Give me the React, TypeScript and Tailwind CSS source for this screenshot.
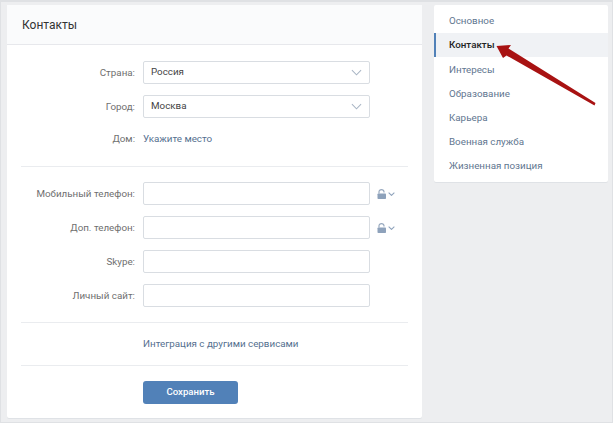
const Chevron = ({ w = 11, h = 7, color = "#a8b5c4", sw = 1.1 }: { w?: number; h?: number; color?: string; sw?: number }) => (
  <svg width={w} height={h} viewBox="0 0 12 7" fill="none" stroke={color} strokeWidth={sw}>
    <path d="M1 1l5 5 5-5" />
  </svg>
);

const Lock = () => (
  <span className="flex items-center gap-[1px]">
    <svg width="10" height="10" viewBox="0 0 10 10">
      <path d="M2 4.5V2.8C2 1.4 3 .7 4.5 .7S7 1.4 7 2.8V3.4" fill="none" stroke="#98a9bf" strokeWidth="1.2" />
      <rect x="0.5" y="4.5" width="8.5" height="5.5" rx="0.8" fill="#8ea2bb" />
    </svg>
    <Chevron w={7} h={4} color="#8fa3bc" sw={1.8} />
  </span>
);

const Label = ({ children }: { children: string }) => (
  <div className="w-[114px] shrink-0 text-right whitespace-nowrap text-[#6f6f6f] text-[9.8px] leading-[14px]">{children}</div>
);

const Field = ({ label, value, select, lock, className }: { label: string; value?: string; select?: boolean; lock?: boolean; className?: string }) => (
  <div className={`flex items-center gap-2 ${className ?? ""}`}>
    <Label>{label}</Label>
    <div className="w-[227px] h-[23px] shrink-0 bg-white border border-[#d9dde2] rounded-[2px] flex items-center justify-between pl-[7px] pr-[7px] text-[9.8px] text-[#444]">
      <span>{value}</span>
      {select && <Chevron />}
    </div>
    {lock && <span className="-ml-[1px]"><Lock /></span>}
  </div>
);

const Divider = ({ className }: { className?: string }) => <div className={`h-px bg-[#eaecef] ${className ?? ""}`} />;

const menu = ["Основное", "Контакты", "Интересы", "Образование", "Карьера", "Военная служба", "Жизненная позиция"];

export default function App() {
  return (
    <div className="w-[613px] h-[423px] overflow-hidden relative bg-[#edeef0] border-t-2 border-l border-r border-b border-[#dfe1e4] font-['Roboto',sans-serif] flex items-start pl-[6px] pt-[3px] gap-3">
      <div className="w-[415px] h-[413px] shrink-0 bg-white rounded-[2px] shadow-[0_1px_0_0_#dfe2e6]">
        <div className="h-[40px] bg-[#fafbfc] border-b border-[#e7e8ec] flex items-center px-[15px] text-[12px] text-[#333]">Контакты</div>
        <div className="px-[14px]">
          <Field label="Страна:" value="Россия" select className="mt-[16px]" />
          <Field label="Город:" value="Москва" select className="mt-[11px]" />
          <div className="flex items-center gap-2 mt-[14px] h-[14px]">
            <Label>Дом:</Label>
            <span className="text-[9.8px] text-[#55708f]">Укажите место</span>
          </div>
          <Divider className="mt-[20px]" />
          <Field label="Мобильный телефон:" lock className="mt-[15px]" />
          <Field label="Доп. телефон:" lock className="mt-[11px]" />
          <Field label="Skype:" className="mt-[11px]" />
          <Field label="Личный сайт:" className="mt-[11px]" />
          <Divider className="mt-[15px]" />
          <div className="h-[42px] pl-[122px] flex items-center text-[9.8px] text-[#55708f]">Интеграция с другими сервисами</div>
          <Divider />
          <button className="block ml-[122px] mt-[15px] w-[95px] h-[23px] rounded-[3px] bg-[#5181b8] text-white text-[9.6px] font-medium">Сохранить</button>
        </div>
      </div>
      <div className="w-[174px] h-[177px] shrink-0 bg-white rounded-[2px] shadow-[0_1px_0_0_#dfe2e6] py-[4px] relative">
        {menu.map((m, i) => (
          <div
            key={m}
            className={
              i === 1
                ? "h-[24.2px] flex items-center pt-[1px] pl-[13px] border-l-2 border-[#5181b8] bg-[#f0f2f5] text-[9.8px] font-medium text-[#222]"
                : "h-[24.2px] flex items-center pt-[1px] pl-[15px] text-[9.8px] text-[#5f7690]"
            }
          >
            {m}
          </div>
        ))}
      </div>
      <svg className="absolute left-[490px] top-[38px]" width="110" height="70" viewBox="0 0 110 70">
        <path d="M5.5 6 L20 5 L17.5 8.5 L104.5 63 L103.5 65.5 L15.5 15.5 L12 18 Z" fill="#a81212" />
      </svg>
    </div>
  );
}
